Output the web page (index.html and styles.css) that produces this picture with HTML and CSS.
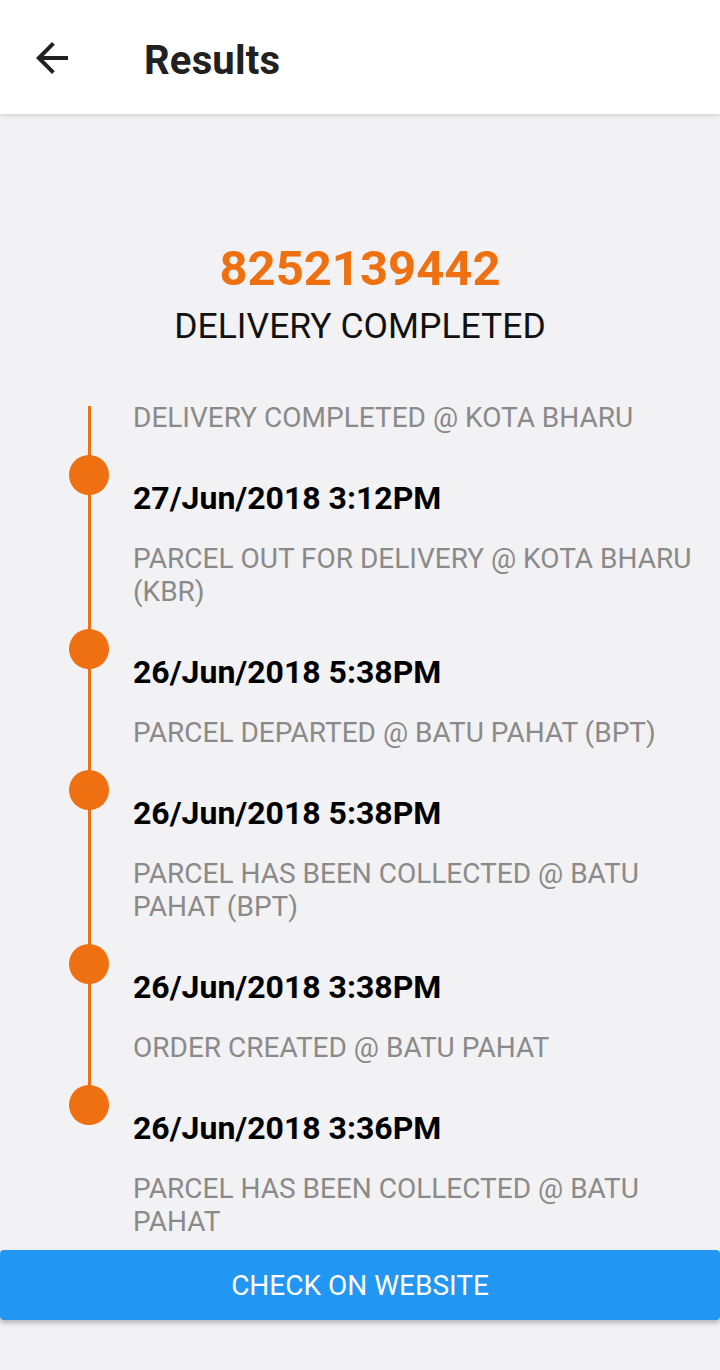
FILE: index.html
```html
<!DOCTYPE html>
<html>
<head>
<meta charset="utf-8">
<link rel="stylesheet" href="styles.css">
</head>
<body>
<header class="appbar">
  <svg class="back" viewBox="0 0 24 24" width="48" height="48"><path d="M20 11H7.83l5.59-5.59L12 4l-8 8 8 8 1.41-1.41L7.83 13H20v-2z" fill="#212121"/></svg>
  <h1 class="title">Results</h1>
</header>
<main class="content">
  <section class="summary">
    <div class="tracking">8252139442</div>
    <div class="status">DELIVERY COMPLETED</div>
  </section>
  <section class="timeline">
    <p class="desc">DELIVERY COMPLETED @ KOTA BHARU</p>
    <div class="entry">
      <div class="date">27/Jun/2018 3:12PM</div>
      <p class="desc">PARCEL OUT FOR DELIVERY @ KOTA BHARU (KBR)</p>
    </div>
    <div class="entry">
      <div class="date">26/Jun/2018 5:38PM</div>
      <p class="desc">PARCEL DEPARTED @ BATU PAHAT (BPT)</p>
    </div>
    <div class="entry">
      <div class="date">26/Jun/2018 5:38PM</div>
      <p class="desc">PARCEL HAS BEEN COLLECTED @ BATU PAHAT (BPT)</p>
    </div>
    <div class="entry">
      <div class="date">26/Jun/2018 3:38PM</div>
      <p class="desc">ORDER CREATED @ BATU PAHAT</p>
    </div>
    <div class="entry">
      <div class="date">26/Jun/2018 3:36PM</div>
      <p class="desc">PARCEL HAS BEEN COLLECTED @ BATU PAHAT</p>
    </div>
  </section>
  <button class="website">CHECK ON WEBSITE</button>
</main>
</body>
</html>
```
FILE: styles.css
```css
html, body {
  margin: 0;
  padding: 0;
}
body {
  background: #f2f1f3;
  font-family: Roboto, "Liberation Sans", sans-serif;
  width: 720px;
  height: 1370px;
  overflow: hidden;
}
.appbar {
  height: 114px;
  background: #ffffff;
  display: flex;
  align-items: center;
  box-shadow: 0 2px 4px rgba(0,0,0,0.12);
  position: relative;
  z-index: 1;
}
.back {
  margin-left: 28px;
  margin-top: 2px;
  flex: none;
}
.title {
  margin: 7px 0 0 68px;
  font-size: 40px;
  font-weight: 700;
  color: #212121;
  line-height: 1;
  letter-spacing: 0.2px;
}
.content {
  display: flex;
  flex-direction: column;
}
.summary {
  display: flex;
  flex-direction: column;
  align-items: center;
  padding-top: 125px;
}
.tracking {
  color: #ef7010;
  font-size: 49px;
  font-weight: 700;
  line-height: 60px;
}
.status {
  margin-top: 7px;
  color: #111111;
  font-size: 35.5px;
  line-height: 40px;
}
.timeline {
  position: relative;
  margin-top: 55px;
  padding: 0 20px 0 133px;
}
.timeline::before {
  content: "";
  position: absolute;
  left: 88px;
  width: 3px;
  top: 5px;
  bottom: 134px;
  background: #ef7010;
}
.desc {
  margin: 0;
  color: #8a8a8a;
  font-size: 28px;
  line-height: 33px;
}
.entry {
  margin-top: 46px;
  display: flex;
  flex-direction: column;
}
.entry .desc {
  margin-top: 26px;
}
.date {
  position: relative;
  color: #000000;
  font-size: 32px;
  font-weight: 700;
  line-height: 36px;
}
.date::before {
  content: "";
  position: absolute;
  left: -64px;
  top: -25px;
  width: 40px;
  height: 40px;
  border-radius: 50%;
  background: #ef7010;
}
.website {
  margin-top: 12px;
  height: 70px;
  border: none;
  border-radius: 4px;
  background: #2196f3;
  color: #ffffff;
  font-family: Roboto, "Liberation Sans", sans-serif;
  font-size: 28px;
  box-shadow: 0 3px 5px rgba(0,0,0,0.25);
  padding: 0;
}
```
